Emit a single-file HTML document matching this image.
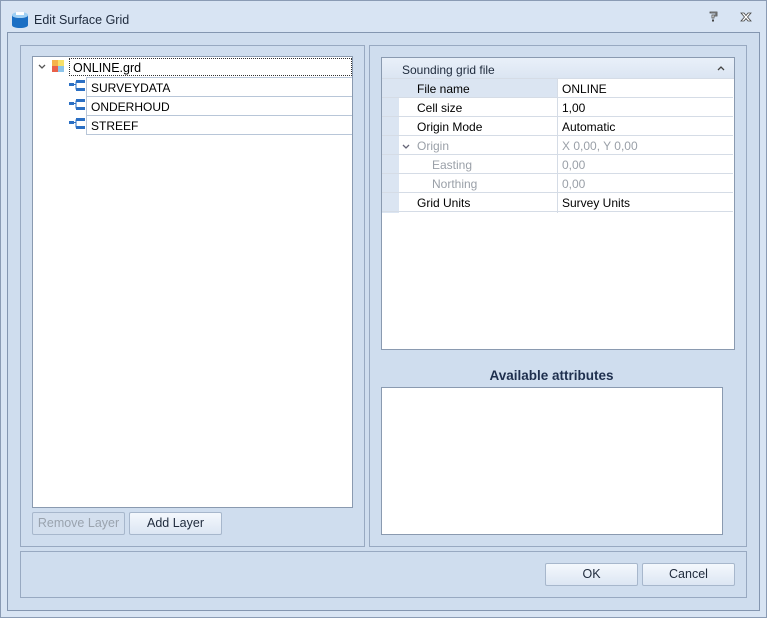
<!DOCTYPE html>
<html><head><style>
*{box-sizing:border-box;margin:0;padding:0}
body{width:767px;height:618px;background:#d6e2f1;font-family:"Liberation Sans",sans-serif;font-size:12px;color:#000;position:relative;overflow:hidden}
.a{position:absolute}
.win{left:0;top:0;width:767px;height:618px;border:1px solid #8a9bb4;background:#d8e4f3}
.client{left:7px;top:32px;width:753px;height:579px;border:1px solid #8496b0;background:#cfddee}
.grp{border:1px solid #98a9c1;background:#cfddee}
.box{background:#fff;border:1px solid #8a9ab0}
.btn{border:1px solid #a7b7cc;border-radius:2px;background:linear-gradient(#f4f8fd,#dce6f3);text-align:center;line-height:21px;font-size:12.5px;color:#1e2a3c}
.row{position:absolute;left:0;width:351px;height:19px;border-bottom:1px solid #d5dce6}
.row span{position:absolute;top:3px}
.n{left:35px}.v{left:180px}
.g{color:#9aa0a8}
</style></head><body>
<div class="a win"></div>
<svg class="a" style="left:10px;top:10px" width="20" height="20" viewBox="0 0 20 20"><ellipse cx="10" cy="5" rx="8" ry="3" fill="#9fd0f5"/><path d="M2 5v10c0 2 4 3 8 3s8-1 8-3V5c0 2-4 3-8 3S2 7 2 5z" fill="#1b6fc4"/><rect x="6" y="2" width="8" height="3" fill="#fff"/></svg>
<div class="a" style="left:34px;top:13px;font-size:12.5px;color:#1e2a3c">Edit Surface Grid</div>
<svg class="a" style="left:708px;top:11px" width="12" height="12" viewBox="0 0 12 12"><path d="M2 1h7v4H6v2H4V4h4V2H2z" fill="#fff" stroke="#444" stroke-width=".8"/><rect x="4" y="8.5" width="2" height="2" fill="#444"/></svg>
<svg class="a" style="left:740px;top:12px" width="12" height="10" viewBox="0 0 12 10"><path d="M1 1h3l2 2.5L8 1h3L7.5 5 11 9H8L6 6.5 4 9H1l3.5-4z" fill="#fff" stroke="#444" stroke-width=".8"/></svg>
<div class="a client"></div>
<div class="a grp" style="left:20px;top:45px;width:345px;height:502px"></div>
<div class="a grp" style="left:369px;top:45px;width:378px;height:502px"></div>
<div class="a grp" style="left:20px;top:551px;width:727px;height:47px"></div>

<div class="a box" style="left:32px;top:56px;width:321px;height:452px">
 <svg class="a" style="left:5px;top:7px" width="8" height="6"><path d="M1 1l3 3 3-3" stroke="#555" fill="none" stroke-width="1.3"/></svg>
 <div class="a" style="left:19px;top:3px;width:12px;height:12px;background:linear-gradient(90deg,#f5b24a 50%,#9fd37a 50%)"><div style="position:absolute;left:6px;top:0;width:6px;height:6px;background:#f7e06a"></div><div style="position:absolute;left:0;top:6px;width:6px;height:6px;background:#e9604a"></div><div style="position:absolute;left:6px;top:6px;width:6px;height:6px;background:#8cc4ea"></div></div>
 <div class="a" style="left:36px;top:1px;width:283px;height:18px;border:1px dotted #333;padding:2px 3px;font-size:12.5px">ONLINE.grd</div>
 <div class="a" style="left:53px;top:20px;width:266px;height:58px;border:1px solid #b8c6d8;border-right:none"></div>
 <div class="a" style="left:53px;top:39px;width:266px;border-top:1px solid #b8c6d8"></div>
 <div class="a" style="left:53px;top:58px;width:266px;border-top:1px solid #b8c6d8"></div>
 <div class="a" style="left:58px;top:24px">SURVEYDATA</div>
 <div class="a" style="left:58px;top:43px">ONDERHOUD</div>
 <div class="a" style="left:58px;top:62px">STREEF</div>
 <svg class="a" style="left:36px;top:23px" width="17" height="54"><g fill="#2a6fc4"><g id="i"><rect x="0" y="3" width="5" height="3"/><rect x="7" y="0" width="9" height="3"/><rect x="7" y="8" width="9" height="3"/><path d="M5 4.5h2M7 1.5v8" stroke="#2a6fc4"/></g><use href="#i" y="19"/><use href="#i" y="38"/></g></svg>
</div>

<div class="a btn" style="left:32px;top:512px;width:93px;height:23px;color:#9aa3ae;background:#d3dfee">Remove Layer</div>
<div class="a btn" style="left:129px;top:512px;width:93px;height:23px">Add Layer</div>

<div class="a box" style="left:381px;top:57px;width:354px;height:293px">
 <div class="a" style="left:0;top:0;width:352px;height:21px;background:linear-gradient(#e9f0f9,#dbe5f2);border-bottom:1px solid #d5dce6"><span style="position:absolute;left:20px;top:5px;color:#1e2a3c">Sounding grid file</span><svg style="position:absolute;left:335px;top:8px" width="8" height="5"><path d="M1 4l3-3 3 3" stroke="#444" fill="none" stroke-width="1.3"/></svg></div>
 <div class="a" style="left:0;top:21px;width:17px;height:134px;background:#dbe5f2"></div>
 <div class="a" style="left:17px;top:21px;width:158px;height:18px;background:#dbe5f2"></div>
 <div class="a" style="left:175px;top:21px;height:134px;border-left:1px solid #d5dce6"></div>
 <div class="row" style="top:21px"><span class="n">File name</span><span class="v">ONLINE</span></div>
 <div class="row" style="top:40px"><span class="n">Cell size</span><span class="v">1,00</span></div>
 <div class="row" style="top:59px"><span class="n">Origin Mode</span><span class="v">Automatic</span></div>
 <div class="row g" style="top:78px"><svg style="position:absolute;left:20px;top:8px" width="8" height="5"><path d="M1 1l3 3 3-3" stroke="#667" fill="none" stroke-width="1.3"/></svg><span class="n">Origin</span><span class="v">X 0,00, Y 0,00</span></div>
 <div class="row g" style="top:97px"><span class="n" style="left:50px">Easting</span><span class="v">0,00</span></div>
 <div class="row g" style="top:116px"><span class="n" style="left:50px">Northing</span><span class="v">0,00</span></div>
 <div class="row" style="top:135px"><span class="n">Grid Units</span><span class="v">Survey Units</span></div>
</div>

<div class="a" style="left:381px;top:368px;width:341px;text-align:center;font-weight:bold;font-size:13.5px;color:#1e2f4e">Available attributes</div>
<div class="a box" style="left:381px;top:387px;width:342px;height:148px"></div>

<div class="a btn" style="left:545px;top:563px;width:93px;height:23px">OK</div>
<div class="a btn" style="left:642px;top:563px;width:93px;height:23px">Cancel</div>
</body></html>
